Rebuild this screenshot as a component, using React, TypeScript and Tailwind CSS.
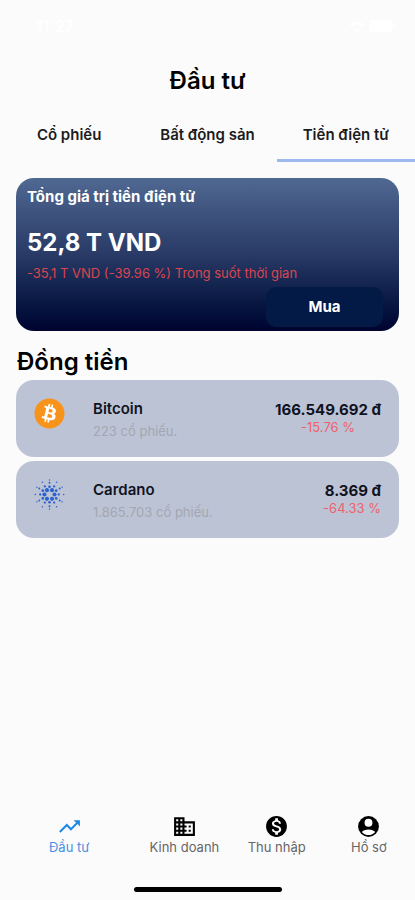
import type { ReactNode } from 'react';
import { FaBitcoin } from 'react-icons/fa';
import { MdBusiness, MdMonetizationOn, MdTrendingUp } from 'react-icons/md';

interface Coin {
  name: string;
  shares: string;
  price: string;
  change: string;
  changeClass: string;
  logo: ReactNode;
}

const CARDANO_RINGS = [
  { count: 6, radius: 5.2, size: 2.1, offset: 0 },
  { count: 6, radius: 8, size: 1.4, offset: 30 },
  { count: 6, radius: 9.6, size: 1.2, offset: 0 },
  { count: 6, radius: 12.2, size: 1, offset: 30 },
  { count: 6, radius: 14.6, size: 0.8, offset: 0 },
  { count: 6, radius: 15, size: 0.7, offset: 30 },
];

function BitcoinLogo() {
  return (
    <div className="flex size-[31px] items-center justify-center rounded-full bg-[radial-gradient(circle,white_60%,transparent_61%)]">
      <FaBitcoin className="size-[31px] text-[#f7931a]" />
    </div>
  );
}

function CardanoLogo() {
  return (
    <svg viewBox="-16 -16 32 32" className="size-[31px] fill-[#2a62cf]" aria-hidden="true">
      {CARDANO_RINGS.map((ring) =>
        Array.from({ length: ring.count }, (_, i) => {
          const angle = ((i * 360) / ring.count + ring.offset) * (Math.PI / 180);
          return (
            <circle
              key={`${ring.radius}-${ring.offset}-${i}`}
              cx={Math.cos(angle) * ring.radius}
              cy={Math.sin(angle) * ring.radius}
              r={ring.size}
            />
          );
        }),
      )}
    </svg>
  );
}

function ProfileIcon({ className }: { className?: string }) {
  return (
    <svg viewBox="0 0 24 24" className={className} aria-hidden="true">
      <circle cx="12" cy="12" r="10" fill="currentColor" />
      <circle cx="12" cy="8.4" r="3.8" fill="white" />
      <path d="M5.6 17.2c1.2-1.6 3.4-2.4 6.4-2.4s5.2.8 6.4 2.4c-1.5 2-3.8 3-6.4 3s-4.9-1-6.4-3Z" fill="white" />
    </svg>
  );
}

const TABS = ['Cổ phiếu', 'Bất động sản', 'Tiền điện tử'];

const COINS: Coin[] = [
  {
    name: 'Bitcoin',
    shares: '223 cổ phiếu.',
    price: '166.549.692 đ',
    change: '-15.76 %',
    changeClass: 'text-center',
    logo: <BitcoinLogo />,
  },
  {
    name: 'Cardano',
    shares: '1.865.703 cổ phiếu.',
    price: '8.369 đ',
    change: '-64.33 %',
    changeClass: 'text-right',
    logo: <CardanoLogo />,
  },
];

const NAV = [
  { label: 'Đầu tư', Icon: MdTrendingUp, className: 'flex-[3] text-[#4a90e2]', iconClass: 'text-[#1e88e5]' },
  { label: 'Kinh doanh', Icon: MdBusiness, className: 'flex-[2] text-[#666666]', iconClass: 'text-black' },
  { label: 'Thu nhập', Icon: MdMonetizationOn, className: 'flex-[2] text-[#666666]', iconClass: 'text-black' },
  { label: 'Hồ sơ', Icon: ProfileIcon, className: 'flex-[2] text-[#666666]', iconClass: 'text-black' },
];

function StatusBar() {
  return (
    <div className="flex h-[52px] items-center justify-between px-5 pl-9 text-white">
      <span className="text-base font-semibold">11:27</span>
      <span className="flex items-center gap-1">
        <svg viewBox="0 0 16 11" className="h-[11px] w-4 fill-current" aria-hidden="true">
          <path d="M8 11 5.8 8.4a3.4 3.4 0 0 1 4.4 0ZM1 3.6a10.2 10.2 0 0 1 14 0l-1.6 1.8a7.8 7.8 0 0 0-10.8 0Z" />
        </svg>
        <svg viewBox="0 0 26 12" className="h-3 w-[26px] fill-current" aria-hidden="true">
          <rect width="23" height="12" rx="3" />
          <rect x="24" y="4" width="2" height="4" rx="1" />
        </svg>
      </span>
    </div>
  );
}

function CoinRow({ coin }: { coin: Coin }) {
  return (
    <li className="flex h-[77px] items-start rounded-[18px] bg-[#bcc3d5] px-[18px]">
      <div className="mt-[18px] w-[59px]">{coin.logo}</div>
      <div className="mt-[18px] flex-1">
        <h3 className="text-[15px] leading-[22px] font-semibold text-[#10131f]">{coin.name}</h3>
        <p className="text-[13px] leading-[22px] text-[#a3a7b0]">{coin.shares}</p>
      </div>
      <div className="mt-[21px]">
        <p className="text-right text-[15px] leading-[18px] font-bold text-[#10131f]">{coin.price}</p>
        <p className={`text-[13px] leading-4 text-[#f0616d] ${coin.changeClass}`}>{coin.change}</p>
      </div>
    </li>
  );
}

export default function App() {
  return (
    <div className="flex min-h-screen flex-col bg-[#fbfbfb] font-['Inter','Liberation_Sans',sans-serif] text-black">
      <StatusBar />

      <h1 className="mt-[13px] text-center text-2xl leading-8 font-semibold">Đầu tư</h1>

      <div role="tablist" className="mt-3 grid grid-cols-3">
        {TABS.map((tab, i) => (
          <button
            key={tab}
            type="button"
            role="tab"
            aria-selected={i === 2}
            className={`h-[53px] border-b-[3px] pt-[2px] text-[15px] font-semibold whitespace-nowrap text-[#1c1c1c] ${
              i === 2 ? 'border-[#9dbaf0]' : 'border-transparent'
            }`}
          >
            {tab}
          </button>
        ))}
      </div>

      <main className="flex-1 px-4 pt-4">
        <section className="flex flex-col rounded-[18px] bg-linear-to-b from-[#506992] via-[#293a66] to-[#00042f] px-[11px] pt-[7px] pb-1">
          <h2 className="text-[15px] leading-6 font-bold text-white">Tổng giá trị tiền điện tử</h2>
          <p className="mt-[18px] text-2xl leading-8 font-bold text-white">52,8 T VND</p>
          <p className="mt-1 text-[13px] leading-5 text-[#d9464f]">-35,1 T VND (-39.96 %) Trong suốt thời gian</p>
          <button
            type="button"
            className="mt-1 mr-[5px] h-10 w-[117px] self-end rounded-[10px] bg-[#021a45] text-[15px] font-bold text-white"
          >
            Mua
          </button>
        </section>

        <h2 className="mt-[15px] pl-px text-2xl leading-8 font-semibold">Đồng tiền</h2>
        <ul className="mt-[2px] flex flex-col gap-1">
          {COINS.map((coin) => (
            <CoinRow key={coin.name} coin={coin} />
          ))}
        </ul>
      </main>

      <nav className="flex">
        {NAV.map(({ label, Icon, className, iconClass }) => (
          <a key={label} href="#" className={`flex basis-0 flex-col items-center text-[13px] leading-4 whitespace-nowrap ${className}`}>
            <Icon className={`size-[25px] ${iconClass}`} />
            {label}
          </a>
        ))}
      </nav>
      <div className="mx-auto mt-8 mb-2 h-[5px] w-[148px] rounded-full bg-black" />
    </div>
  );
}
